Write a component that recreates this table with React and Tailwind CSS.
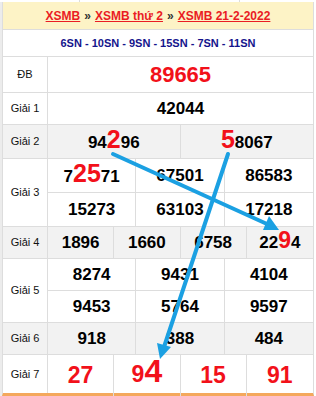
import React from "react";

const font = { fontFamily: '"Liberation Sans", Arial, sans-serif' };

function Red({ children, size }) {
  return <span className={`text-[#f2111a] leading-none ${size}`}>{children}</span>;
}

function Label({ children }) {
  return (
    <div className="w-[45px] shrink-0 border-r border-[#dddddd] flex items-center justify-center text-[11px] text-[#111]">
      {children}
    </div>
  );
}

function Cell({ children, last, top }) {
  return (
    <div
      className={`flex items-center justify-center text-[17px] font-bold text-black ${last ? "" : "border-r"} ${top ? "border-b" : ""} border-[#dddddd]`}
    >
      <span>{children}</span>
    </div>
  );
}

export default function App() {
  return (
    <div style={font} className="relative w-[316px] h-[396px] bg-white overflow-hidden">
      <div className="flex h-[2px]">
        <div className="w-[80px] border-r border-[#dddddd]" />
        <div className="w-[160px] border-r border-[#dddddd]" />
      </div>

      <div className="border-l-2 border-[#ececec]">
        <div className="w-[312px] border-x border-[#dddddd] border-b-[3px] border-b-[#f4a85c]">
          {/* header */}
          <div className="h-[28px] bg-[#fdf3c6] border-b border-[#dddddd] flex items-center justify-center text-[12px] font-bold">
            <a className="text-[#ea1c24] underline">XSMB</a>
            <span className="mx-[4px] text-[#333]">»</span>
            <a className="text-[#ea1c24] underline">XSMB thứ 2</a>
            <span className="mx-[4px] text-[#333]">»</span>
            <a className="text-[#ea1c24] underline">XSMB 21-2-2022</a>
          </div>

          {/* SN */}
          <div className="h-[27px] border-b border-[#dddddd] flex items-center justify-center text-[11px] font-bold text-[#14148c]">
            6SN - 10SN - 9SN - 15SN - 7SN - 11SN
          </div>

          {/* DB */}
          <div className="flex h-[36px] border-b border-[#dddddd]">
            <Label>ĐB</Label>
            <div className="flex-1 flex items-center justify-center text-[22px] font-bold text-[#f2111a]">89665</div>
          </div>

          {/* Giai 1 */}
          <div className="flex h-[32px] border-b border-[#dddddd]">
            <Label>Giải 1</Label>
            <div className="flex-1 grid grid-cols-1">
              <Cell last>42044</Cell>
            </div>
          </div>

          {/* Giai 2 */}
          <div className="flex h-[34px] border-b border-[#dddddd] bg-[#f2f2f2]">
            <Label>Giải 2</Label>
            <div className="flex-1 grid grid-cols-2">
              <Cell>
                94<Red size="text-[25px]">2</Red>96
              </Cell>
              <Cell last>
                <Red size="text-[25px]">5</Red>8067
              </Cell>
            </div>
          </div>

          {/* Giai 3 */}
          <div className="flex h-[68px] border-b border-[#dddddd]">
            <Label>Giải 3</Label>
            <div className="flex-1 grid grid-cols-3 grid-rows-[34px_1fr]">
              <Cell top>
                7<Red size="text-[25px]">25</Red>71
              </Cell>
              <Cell top>67501</Cell>
              <Cell top last>86583</Cell>
              <Cell>15273</Cell>
              <Cell>63103</Cell>
              <Cell last>17218</Cell>
            </div>
          </div>

          {/* Giai 4 */}
          <div className="flex h-[32px] border-b border-[#dddddd] bg-[#f2f2f2]">
            <Label>Giải 4</Label>
            <div className="flex-1 grid grid-cols-4">
              <Cell>1896</Cell>
              <Cell>1660</Cell>
              <Cell>6758</Cell>
              <Cell last>
                22<Red size="text-[23px]">9</Red>4
              </Cell>
            </div>
          </div>

          {/* Giai 5 */}
          <div className="flex h-[64px] border-b border-[#dddddd]">
            <Label>Giải 5</Label>
            <div className="flex-1 grid grid-cols-3 grid-rows-2">
              <Cell top>8274</Cell>
              <Cell top>9431</Cell>
              <Cell top last>4104</Cell>
              <Cell>9453</Cell>
              <Cell>5764</Cell>
              <Cell last>9597</Cell>
            </div>
          </div>

          {/* Giai 6 */}
          <div className="flex h-[32px] border-b border-[#dddddd] bg-[#f2f2f2]">
            <Label>Giải 6</Label>
            <div className="flex-1 grid grid-cols-3">
              <Cell>918</Cell>
              <Cell>388</Cell>
              <Cell last>484</Cell>
            </div>
          </div>

          {/* Giai 7 */}
          <div className="flex h-[38px]">
            <Label>Giải 7</Label>
            <div className="flex-1 grid grid-cols-4 text-[#f2111a] font-bold text-[23px] leading-none">
              <div className="border-r border-[#dddddd] flex items-center justify-center">27</div>
              <div className="border-r border-[#dddddd] flex items-end justify-center pb-[9px]">
                <span>9<span className="text-[32px]">4</span></span>
              </div>
              <div className="border-r border-[#dddddd] flex items-center justify-center">15</div>
              <div className="flex items-center justify-center">91</div>
            </div>
          </div>
        </div>
      </div>

      {/* arrows drawn over the table */}
      <svg className="absolute inset-0 pointer-events-none" width="316" height="396">
        <g stroke="#1ba0e2" strokeWidth="4" strokeLinecap="round">
          <line x1="113" y1="154" x2="267" y2="224" />
          <line x1="228" y1="154" x2="164" y2="347" />
        </g>
        <g fill="#1ba0e2">
          <polygon points="279,230 263,230 269,216" />
          <polygon points="160,359 157,343 171,347" />
        </g>
      </svg>
    </div>
  );
}
